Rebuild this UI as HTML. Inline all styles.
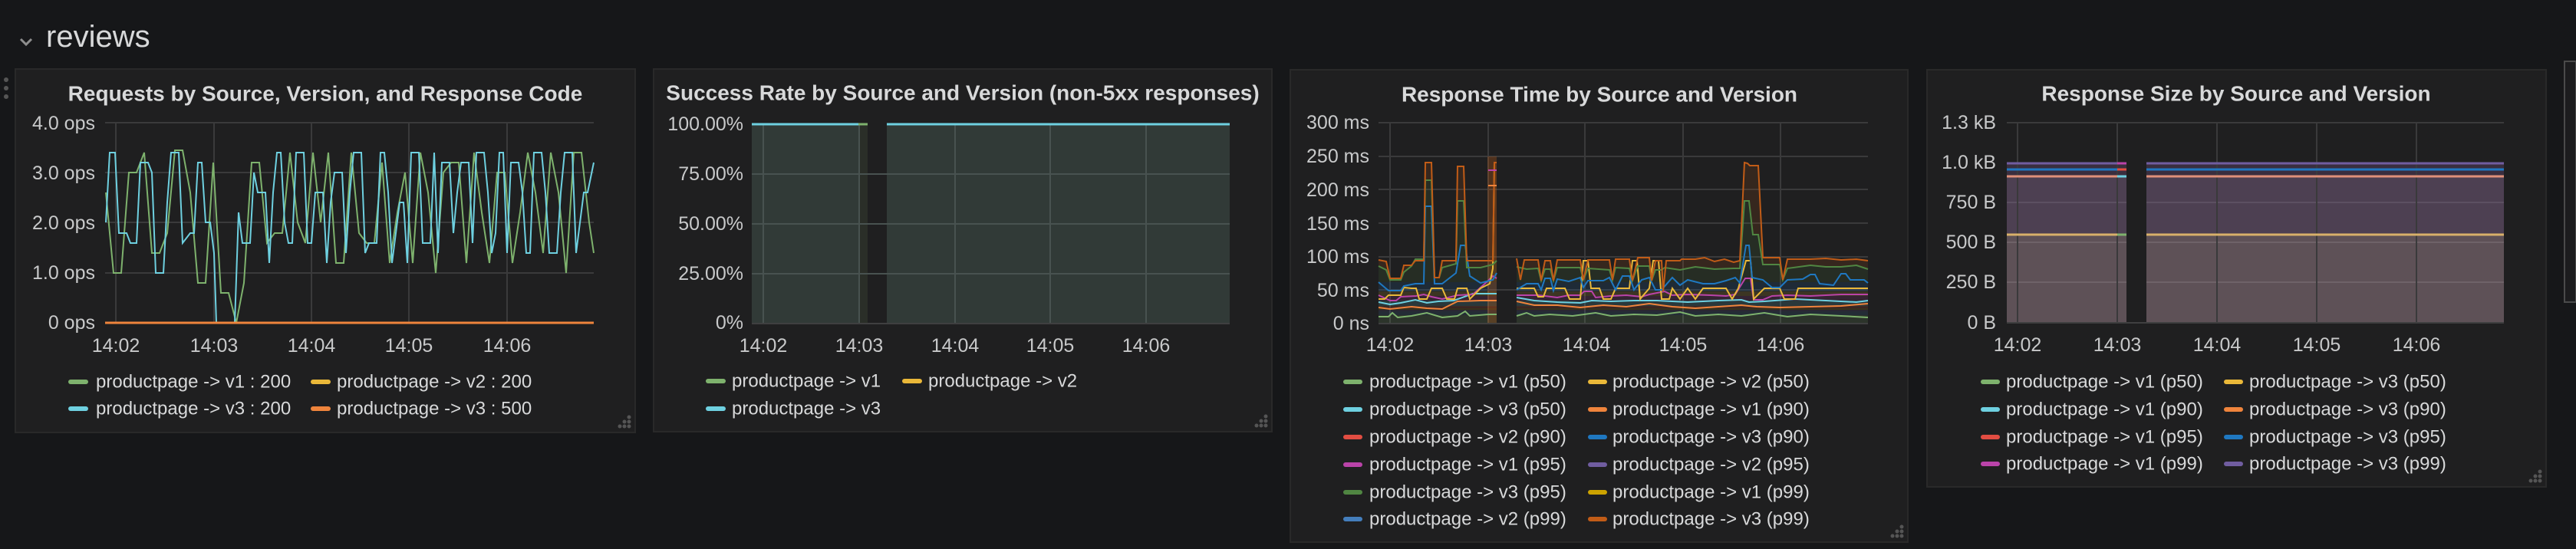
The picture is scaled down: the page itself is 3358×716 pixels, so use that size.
<!DOCTYPE html>
<html><head><meta charset="utf-8"><style>
html,body{margin:0;padding:0;background:#161719;width:3358px;height:716px;overflow:hidden}
svg{display:block}
text{font-family:"Liberation Sans",sans-serif}
.t{font-size:28px;font-weight:bold;fill:#d8d9da}
.ax{font-size:25px;fill:#c8c9ca}
.lg{font-size:24px;fill:#d8d9da}
.g{stroke:#3a3a3b;stroke-width:2}
</style></head><body>
<svg width="3358" height="716" viewBox="0 0 3358 716">
<!-- header -->
<path d="M27 51 L34 58 L41 51" fill="none" stroke="#8e8e8e" stroke-width="3"/>
<text x="60" y="48" font-size="40" fill="#d8d9da" dominant-baseline="central" style="font-family:'Liberation Sans',sans-serif">reviews</text>
<g fill="#555"><circle cx="8" cy="104" r="3"/><circle cx="8" cy="115" r="3"/><circle cx="8" cy="126" r="3"/></g>
<!-- scrollbar -->
<rect x="3343" y="80" width="15" height="314" fill="#1c1c1e" stroke="#4a4a4a" stroke-width="2"/>

<!-- panels -->
<rect x="20" y="90" width="808" height="474" fill="#1f1f20" stroke="#292929" stroke-width="2"/>
<rect x="852" y="90" width="806" height="473" fill="#1f1f20" stroke="#292929" stroke-width="2"/>
<rect x="1682" y="91" width="805" height="616" fill="#1f1f20" stroke="#292929" stroke-width="2"/>
<rect x="2512" y="91" width="807" height="544" fill="#1f1f20" stroke="#292929" stroke-width="2"/>

<!-- resize handles -->
<g fill="#555">
<circle cx="820" cy="556" r="2.5"/><circle cx="814" cy="556" r="2.5"/><circle cx="820" cy="550" r="2.5"/><circle cx="808" cy="556" r="2.5"/><circle cx="814" cy="550" r="2.5"/><circle cx="820" cy="544" r="2.5"/>
<circle cx="1650" cy="555" r="2.5"/><circle cx="1644" cy="555" r="2.5"/><circle cx="1650" cy="549" r="2.5"/><circle cx="1638" cy="555" r="2.5"/><circle cx="1644" cy="549" r="2.5"/><circle cx="1650" cy="543" r="2.5"/>
<circle cx="2479" cy="699" r="2.5"/><circle cx="2473" cy="699" r="2.5"/><circle cx="2479" cy="693" r="2.5"/><circle cx="2467" cy="699" r="2.5"/><circle cx="2473" cy="693" r="2.5"/><circle cx="2479" cy="687" r="2.5"/>
<circle cx="3311" cy="627" r="2.5"/><circle cx="3305" cy="627" r="2.5"/><circle cx="3311" cy="621" r="2.5"/><circle cx="3299" cy="627" r="2.5"/><circle cx="3305" cy="621" r="2.5"/><circle cx="3311" cy="615" r="2.5"/>
</g>

<!-- ============ PANEL 1 ============ -->
<text class="t" x="424" y="122" text-anchor="middle" dominant-baseline="central">Requests by Source, Version, and Response Code</text>
<g class="g">
<line x1="137" y1="160" x2="774" y2="160"/><line x1="137" y1="225" x2="774" y2="225"/><line x1="137" y1="290" x2="774" y2="290"/><line x1="137" y1="356" x2="774" y2="356"/>
<line x1="151" y1="160" x2="151" y2="421"/><line x1="279" y1="160" x2="279" y2="421"/><line x1="406" y1="160" x2="406" y2="421"/><line x1="533" y1="160" x2="533" y2="421"/><line x1="661" y1="160" x2="661" y2="421"/>
</g>
<g class="ax" text-anchor="end" dominant-baseline="central">
<text x="124" y="161">4.0 ops</text><text x="124" y="226">3.0 ops</text><text x="124" y="291">2.0 ops</text><text x="124" y="356">1.0 ops</text><text x="124" y="421">0 ops</text>
</g>
<g class="ax" text-anchor="middle" dominant-baseline="central">
<text x="151" y="451">14:02</text><text x="279" y="451">14:03</text><text x="406" y="451">14:04</text><text x="533" y="451">14:05</text><text x="661" y="451">14:06</text>
</g>
<polyline fill="none" stroke="#7eb26d" stroke-width="2" points="138,251 148,356 158,356 168,225 178,225 188,199 198,330 208,330 218,304 228,196 238,196 248,251 258,369 268,369 278,212 288,382 298,382 308,421 318,369 328,212 338,212 348,317 358,304 368,304 378,199 388,290 398,317 408,199 418,290 428,199 438,343 448,343 458,199 468,304 478,317 488,317 498,212 508,343 518,277 528,225 538,343 548,199 558,251 568,356 578,225 588,212 598,212 608,343 618,199 628,277 638,343 648,225 658,225 668,343 678,277 688,199 698,251 708,330 718,199 728,251 738,356 748,199 758,199 768,290 774,330"/>
<polyline fill="none" stroke="#6ed0e0" stroke-width="2" points="138,290 143,199 150,199 155,304 165,304 170,317 178,317 183,212 193,212 198,225 203,356 213,356 218,264 223,199 233,199 238,317 248,304 253,304 258,212 263,212 268,290 274,290 279,330 282,421 306,421 311,277 316,317 326,317 331,225 336,251 346,251 351,343 356,251 361,199 366,199 371,290 376,317 381,317 386,199 396,199 401,317 406,317 411,251 421,251 426,343 431,264 436,225 446,225 451,330 456,251 461,199 471,199 476,330 481,317 491,317 496,199 501,199 506,251 511,343 516,304 521,264 526,264 531,343 536,199 546,199 551,317 561,317 566,199 571,330 576,212 586,212 591,304 596,251 601,212 611,212 616,317 621,199 631,199 636,251 641,330 646,304 651,199 656,199 661,330 666,212 676,212 681,251 686,330 691,330 696,199 706,199 711,251 716,330 726,330 731,251 736,199 746,199 751,330 761,251 766,251 774,212"/>
<line x1="137" y1="421" x2="774" y2="421" stroke="#ef843c" stroke-width="3"/>
<g>
<rect x="89" y="495" width="26" height="6" rx="3" fill="#7eb26d"/><text class="lg" x="125" y="498" dominant-baseline="central">productpage -&gt; v1 : 200</text>
<rect x="405" y="495" width="26" height="6" rx="3" fill="#eab839"/><text class="lg" x="439" y="498" dominant-baseline="central">productpage -&gt; v2 : 200</text>
<rect x="89" y="530" width="26" height="6" rx="3" fill="#6ed0e0"/><text class="lg" x="125" y="533" dominant-baseline="central">productpage -&gt; v3 : 200</text>
<rect x="405" y="530" width="26" height="6" rx="3" fill="#ef843c"/><text class="lg" x="439" y="533" dominant-baseline="central">productpage -&gt; v3 : 500</text>
</g>

<!-- ============ PANEL 2 ============ -->
<text class="t" x="1255" y="121" text-anchor="middle" dominant-baseline="central">Success Rate by Source and Version (non-5xx responses)</text>
<rect x="980" y="162" width="139" height="260" fill="#313a37"/>
<rect x="1119" y="162" width="12" height="260" fill="#2a2e28"/>
<rect x="1156" y="162" width="447" height="260" fill="#313a37"/>
<g class="g" style="stroke:#485250">
<line x1="980" y1="227" x2="1603" y2="227"/><line x1="980" y1="292" x2="1603" y2="292"/><line x1="980" y1="357" x2="1603" y2="357"/>
<line x1="995" y1="162" x2="995" y2="422"/><line x1="1120" y1="162" x2="1120" y2="422"/><line x1="1245" y1="162" x2="1245" y2="422"/><line x1="1369" y1="162" x2="1369" y2="422"/><line x1="1494" y1="162" x2="1494" y2="422"/>
</g>
<line x1="980" y1="422" x2="1603" y2="422" stroke="#3f3f40" stroke-width="2"/>
<line x1="980" y1="162" x2="1119" y2="162" stroke="#6ed0e0" stroke-width="3"/>
<line x1="1119" y1="162" x2="1131" y2="162" stroke="#7eb26d" stroke-width="3"/>
<line x1="1156" y1="162" x2="1603" y2="162" stroke="#6ed0e0" stroke-width="3"/>
<g class="ax" text-anchor="end" dominant-baseline="central">
<text x="969" y="162">100.00%</text><text x="969" y="227">75.00%</text><text x="969" y="292">50.00%</text><text x="969" y="357">25.00%</text><text x="969" y="421">0%</text>
</g>
<g class="ax" text-anchor="middle" dominant-baseline="central">
<text x="995" y="451">14:02</text><text x="1120" y="451">14:03</text><text x="1245" y="451">14:04</text><text x="1369" y="451">14:05</text><text x="1494" y="451">14:06</text>
</g>
<rect x="920" y="494" width="26" height="6" rx="3" fill="#7eb26d"/><text class="lg" x="954" y="497" dominant-baseline="central">productpage -&gt; v1</text>
<rect x="1176" y="494" width="26" height="6" rx="3" fill="#eab839"/><text class="lg" x="1210" y="497" dominant-baseline="central">productpage -&gt; v2</text>
<rect x="920" y="530" width="26" height="6" rx="3" fill="#6ed0e0"/><text class="lg" x="954" y="533" dominant-baseline="central">productpage -&gt; v3</text>

<!-- ============ PANEL 3 ============ -->
<text class="t" x="2085" y="123" text-anchor="middle" dominant-baseline="central">Response Time by Source and Version</text>
<g class="g">
<line x1="1797" y1="160" x2="2435" y2="160"/><line x1="1797" y1="204" x2="2435" y2="204"/><line x1="1797" y1="247" x2="2435" y2="247"/><line x1="1797" y1="291" x2="2435" y2="291"/><line x1="1797" y1="335" x2="2435" y2="335"/><line x1="1797" y1="378" x2="2435" y2="378"/>
<line x1="1812" y1="160" x2="1812" y2="422"/><line x1="1940" y1="160" x2="1940" y2="422"/><line x1="2066" y1="160" x2="2066" y2="422"/><line x1="2194" y1="160" x2="2194" y2="422"/><line x1="2321" y1="160" x2="2321" y2="422"/>
</g>
<g opacity="0.14">
<polygon fill="#c15c17" points="1797,422 1797,339 1807,341 1812,363 1826,363 1830,346 1840,346 1845,340 1856,340 1858,212 1866,212 1870,362 1876,362 1880,340 1898,340 1900,217 1908,217 1912,340 1946,340 1948,212 1951,212 1951,422"/>
<polygon fill="#c15c17" points="1977,422 1977,337 1982,365 1987,339 2005,339 2009,366 2014,340 2021,340 2025,366 2030,339 2060,339 2064,365 2070,339 2098,339 2102,365 2106,338 2124,338 2128,366 2135,336 2150,336 2153,366 2158,340 2166,340 2168,380 2172,340 2190,340 2192,338 2210,338 2222,336 2235,341 2248,338 2260,342 2268,340 2274,212 2278,213 2281,216 2292,216 2298,336 2320,336 2324,365 2330,338 2360,338 2380,337 2400,339 2420,338 2435,340 2435,422"/>
<polygon fill="#508642" points="1797,422 1797,347 1807,352 1812,365 1826,365 1830,355 1840,347 1845,338 1856,338 1858,235 1866,235 1870,362 1876,362 1880,349 1898,344 1900,262 1908,262 1912,349 1930,349 1946,345 1951,340 1951,422"/>
<polygon fill="#508642" points="1977,422 1977,348 1990,351 2005,350 2009,366 2014,351 2021,351 2025,366 2030,349 2060,349 2064,365 2070,350 2098,352 2102,365 2106,349 2124,350 2128,366 2135,347 2150,347 2153,366 2158,352 2166,352 2170,349 2190,352 2210,348 2235,351 2260,350 2268,350 2274,262 2280,262 2285,306 2292,306 2298,345 2320,345 2324,365 2330,350 2360,346 2380,348 2400,348 2420,346 2435,351 2435,422"/>
<rect x="1797" y="368" width="154" height="54" fill="#1f78c1"/><rect x="1977" y="368" width="458" height="54" fill="#1f78c1"/>
<rect x="1797" y="380" width="154" height="42" fill="#eab839"/><rect x="1977" y="380" width="458" height="42" fill="#eab839"/>
<rect x="1797" y="386" width="154" height="36" fill="#ba43a9"/><rect x="1977" y="386" width="458" height="36" fill="#ba43a9"/>
<rect x="1797" y="392" width="154" height="30" fill="#6ed0e0"/><rect x="1977" y="392" width="458" height="30" fill="#6ed0e0"/>
<rect x="1797" y="399" width="154" height="23" fill="#ef843c"/><rect x="1977" y="399" width="458" height="23" fill="#ef843c"/>
<rect x="1797" y="400" width="154" height="22" fill="#e24d42"/><rect x="1977" y="400" width="458" height="22" fill="#e24d42"/>
<rect x="1797" y="402" width="154" height="20" fill="#cca300"/><rect x="1977" y="402" width="458" height="20" fill="#cca300"/>
<rect x="1797" y="404" width="154" height="18" fill="#705da0"/><rect x="1977" y="404" width="458" height="18" fill="#705da0"/>
<rect x="1797" y="406" width="154" height="16" fill="#447ebc"/><rect x="1977" y="406" width="458" height="16" fill="#447ebc"/>
<rect x="1797" y="411" width="154" height="11" fill="#7eb26d"/><rect x="1977" y="411" width="458" height="11" fill="#7eb26d"/>
</g>
<rect x="1939" y="204" width="12" height="218" fill="#c15c17" opacity="0.3"/>
<g fill="none" stroke-width="2">
<polyline stroke="#7eb26d" points="1797,413 1810,413 1815,408 1822,414 1840,412 1860,408 1880,414 1900,412 1910,406 1916,412 1940,410 1951,410"/>
<polyline stroke="#7eb26d" points="1977,412 1990,408 2000,412 2020,410 2050,412 2080,408 2100,412 2130,410 2160,411 2190,407 2210,412 2240,410 2270,412 2300,408 2330,413 2360,410 2400,412 2435,414"/>
<polyline stroke="#ef843c" points="1797,401 1812,403 1840,400 1860,402 1880,403 1900,393 1930,392 1951,392"/>
<polyline stroke="#ef843c" points="1977,393 2000,398 2030,398 2060,401 2090,398 2120,400 2150,396 2180,400 2210,402 2240,400 2270,398 2290,400 2320,401 2360,400 2400,399 2435,396"/>
<polyline stroke="#6ed0e0" points="1797,394 1812,397 1826,395 1845,391 1860,395 1875,393 1895,392 1920,383 1951,383"/>
<polyline stroke="#6ed0e0" points="1977,388 2000,392 2030,394 2060,395 2075,392 2100,393 2130,392 2160,392 2200,394 2240,392 2270,391 2280,394 2300,393 2340,390 2380,392 2420,394 2435,392"/>
<polyline stroke="#ba43a9" points="1797,385 1812,392 1820,392 1826,387 1846,386 1856,384 1866,387 1880,390 1900,385 1920,384 1940,366 1946,360 1951,363"/>
<polyline stroke="#ba43a9" points="1977,385 2005,385 2014,386 2030,388 2045,385 2060,385 2065,380 2075,380 2080,388 2100,386 2120,385 2140,387 2150,384 2170,380 2180,385 2200,384 2230,385 2250,386 2262,384 2275,363 2282,363 2286,391 2298,391 2310,386 2330,385 2360,386 2400,384 2435,384"/>
<polyline stroke="#eab839" points="1797,390 1805,390 1810,385 1826,385 1830,375 1840,376 1846,376 1850,390 1860,390 1866,376 1880,376 1886,390 1896,390 1900,376 1912,376 1916,390 1930,376 1942,370 1946,350 1948,212 1951,212"/>
<polyline stroke="#eab839" points="1977,376 2000,376 2005,387 2012,387 2016,376 2030,376 2040,376 2046,390 2060,390 2064,340 2070,340 2074,376 2085,376 2090,390 2100,390 2106,376 2124,376 2128,340 2134,340 2138,390 2150,376 2155,340 2162,340 2166,390 2176,390 2180,376 2190,390 2200,376 2210,390 2220,376 2240,376 2250,376 2258,390 2266,376 2276,340 2282,340 2286,390 2300,376 2320,376 2326,390 2340,390 2344,376 2400,376 2435,376"/>
<polyline stroke="#1f78c1" points="1797,368 1810,379 1826,379 1830,373 1845,370 1856,370 1858,269 1866,269 1870,370 1880,370 1898,356 1904,320 1910,320 1916,360 1930,369 1946,365 1951,356"/>
<polyline stroke="#1f78c1" points="1977,378 1990,370 2005,370 2009,378 2014,363 2021,363 2025,379 2030,364 2045,367 2060,362 2064,375 2070,366 2090,366 2098,362 2106,378 2115,360 2124,360 2130,378 2140,365 2150,362 2158,378 2166,378 2180,362 2190,372 2200,365 2220,370 2235,370 2250,366 2262,362 2268,369 2276,320 2280,320 2284,362 2298,365 2310,375 2320,375 2330,365 2350,364 2360,358 2366,358 2372,370 2390,372 2400,357 2406,357 2412,365 2430,365 2435,369"/>
<polyline stroke="#508642" points="1797,347 1807,352 1812,365 1826,365 1830,355 1840,347 1845,338 1856,338 1858,235 1866,235 1870,362 1876,362 1880,349 1898,344 1900,262 1908,262 1912,349 1930,349 1946,345 1951,340"/>
<polyline stroke="#508642" points="1977,348 1990,351 2005,350 2009,366 2014,351 2021,351 2025,366 2030,349 2060,349 2064,365 2070,350 2098,352 2102,365 2106,349 2124,350 2128,366 2135,347 2150,347 2153,366 2158,352 2166,352 2170,349 2190,352 2210,348 2235,351 2260,350 2268,350 2274,262 2280,262 2285,306 2292,306 2298,345 2320,345 2324,365 2330,350 2360,346 2380,348 2400,348 2420,346 2435,351"/>
<polyline stroke="#c15c17" points="1797,339 1807,341 1812,363 1826,363 1830,346 1840,346 1845,340 1856,340 1858,212 1866,212 1870,362 1876,362 1880,340 1898,340 1900,217 1908,217 1912,340 1946,340 1948,212 1951,212"/>
<polyline stroke="#c15c17" points="1977,337 1982,365 1987,339 2005,339 2009,366 2014,340 2021,340 2025,366 2030,339 2060,339 2064,365 2070,339 2098,339 2102,365 2106,338 2124,338 2128,366 2135,336 2150,336 2153,366 2158,340 2166,340 2168,380 2172,340 2190,340 2192,338 2210,338 2222,336 2235,341 2248,338 2260,342 2268,340 2274,212 2278,213 2281,216 2292,216 2298,336 2320,336 2324,365 2330,338 2360,338 2380,337 2400,339 2420,338 2435,340"/>
<line x1="1940" y1="222" x2="1951" y2="222" stroke="#ba43a9"/>
<line x1="1940" y1="242" x2="1951" y2="242" stroke="#ef843c"/>
</g>
<line x1="1797" y1="422" x2="2435" y2="422" stroke="#3f3f40" stroke-width="2"/>
<g class="ax" text-anchor="end" dominant-baseline="central">
<text x="1785" y="160">300 ms</text><text x="1785" y="204">250 ms</text><text x="1785" y="248">200 ms</text><text x="1785" y="292">150 ms</text><text x="1785" y="335">100 ms</text><text x="1785" y="379">50 ms</text><text x="1785" y="422">0 ns</text>
</g>
<g class="ax" text-anchor="middle" dominant-baseline="central">
<text x="1812" y="450">14:02</text><text x="1940" y="450">14:03</text><text x="2068" y="450">14:04</text><text x="2194" y="450">14:05</text><text x="2321" y="450">14:06</text>
</g>
<g>
<rect x="1751" y="495" width="25" height="6" rx="3" fill="#7eb26d"/><text class="lg" x="1785" y="498" dominant-baseline="central">productpage -&gt; v1 (p50)</text>
<rect x="2070" y="495" width="25" height="6" rx="3" fill="#eab839"/><text class="lg" x="2102" y="498" dominant-baseline="central">productpage -&gt; v2 (p50)</text>
<rect x="1751" y="531" width="25" height="6" rx="3" fill="#6ed0e0"/><text class="lg" x="1785" y="534" dominant-baseline="central">productpage -&gt; v3 (p50)</text>
<rect x="2070" y="531" width="25" height="6" rx="3" fill="#ef843c"/><text class="lg" x="2102" y="534" dominant-baseline="central">productpage -&gt; v1 (p90)</text>
<rect x="1751" y="567" width="25" height="6" rx="3" fill="#e24d42"/><text class="lg" x="1785" y="570" dominant-baseline="central">productpage -&gt; v2 (p90)</text>
<rect x="2070" y="567" width="25" height="6" rx="3" fill="#1f78c1"/><text class="lg" x="2102" y="570" dominant-baseline="central">productpage -&gt; v3 (p90)</text>
<rect x="1751" y="603" width="25" height="6" rx="3" fill="#ba43a9"/><text class="lg" x="1785" y="606" dominant-baseline="central">productpage -&gt; v1 (p95)</text>
<rect x="2070" y="603" width="25" height="6" rx="3" fill="#705da0"/><text class="lg" x="2102" y="606" dominant-baseline="central">productpage -&gt; v2 (p95)</text>
<rect x="1751" y="639" width="25" height="6" rx="3" fill="#508642"/><text class="lg" x="1785" y="642" dominant-baseline="central">productpage -&gt; v3 (p95)</text>
<rect x="2070" y="639" width="25" height="6" rx="3" fill="#cca300"/><text class="lg" x="2102" y="642" dominant-baseline="central">productpage -&gt; v1 (p99)</text>
<rect x="1751" y="674" width="25" height="6" rx="3" fill="#447ebc"/><text class="lg" x="1785" y="677" dominant-baseline="central">productpage -&gt; v2 (p99)</text>
<rect x="2070" y="674" width="25" height="6" rx="3" fill="#c15c17"/><text class="lg" x="2102" y="677" dominant-baseline="central">productpage -&gt; v3 (p99)</text>
</g>

<!-- ============ PANEL 4 ============ -->
<text class="t" x="2915" y="122" text-anchor="middle" dominant-baseline="central">Response Size by Source and Version</text>
<rect x="2616" y="212" width="156" height="18" fill="#3a2e3f"/><rect x="2798" y="212" width="466" height="18" fill="#3a2e3f"/>
<rect x="2616" y="230" width="156" height="76" fill="#4d4052"/><rect x="2798" y="230" width="466" height="76" fill="#4d4052"/>
<rect x="2616" y="306" width="156" height="115" fill="#5e5157"/><rect x="2798" y="306" width="466" height="115" fill="#5e5157"/>
<g class="g">
<line x1="2616" y1="160" x2="3264" y2="160"/>
<line x1="2616" y1="264" x2="3264" y2="264" style="stroke:#5c5062"/><line x1="2616" y1="316" x2="3264" y2="316" style="stroke:#6e6268"/><line x1="2616" y1="368" x2="3264" y2="368" style="stroke:#6e6268"/>
<line x1="2630" y1="160" x2="2630" y2="421"/><line x1="2760" y1="160" x2="2760" y2="421"/><line x1="2890" y1="160" x2="2890" y2="421"/><line x1="3020" y1="160" x2="3020" y2="421"/><line x1="3150" y1="160" x2="3150" y2="421"/>
</g>
<rect x="2772" y="212" width="26" height="210" fill="#1f1f20"/>
<g stroke-width="3">
<line x1="2616" y1="213" x2="2772" y2="213" stroke="#705da0"/><line x1="2798" y1="213" x2="3264" y2="213" stroke="#705da0"/>
<line x1="2760" y1="213" x2="2772" y2="213" stroke="#ba43a9"/>
<line x1="2616" y1="221" x2="2760" y2="221" stroke="#1f78c1"/><line x1="2760" y1="221" x2="2772" y2="221" stroke="#e24d42"/><line x1="2798" y1="221" x2="3264" y2="221" stroke="#1f78c1"/>
<line x1="2616" y1="230" x2="2772" y2="230" stroke="#e0917a"/><line x1="2760" y1="230" x2="2772" y2="230" stroke="#6ed0e0"/><line x1="2798" y1="230" x2="3264" y2="230" stroke="#e0917a"/>
<line x1="2616" y1="306" x2="2772" y2="306" stroke="#d8b06a"/><line x1="2760" y1="306" x2="2772" y2="306" stroke="#7eb26d"/><line x1="2798" y1="306" x2="3264" y2="306" stroke="#d8b06a"/>
</g>
<line x1="2616" y1="421" x2="3264" y2="421" stroke="#3f3f40" stroke-width="2"/>
<g class="ax" text-anchor="end" dominant-baseline="central">
<text x="2602" y="160">1.3 kB</text><text x="2602" y="212">1.0 kB</text><text x="2602" y="264">750 B</text><text x="2602" y="316">500 B</text><text x="2602" y="368">250 B</text><text x="2602" y="421">0 B</text>
</g>
<g class="ax" text-anchor="middle" dominant-baseline="central">
<text x="2630" y="450">14:02</text><text x="2760" y="450">14:03</text><text x="2890" y="450">14:04</text><text x="3020" y="450">14:05</text><text x="3150" y="450">14:06</text>
</g>
<g>
<rect x="2582" y="495" width="25" height="6" rx="3" fill="#7eb26d"/><text class="lg" x="2615" y="498" dominant-baseline="central">productpage -&gt; v1 (p50)</text>
<rect x="2899" y="495" width="25" height="6" rx="3" fill="#eab839"/><text class="lg" x="2932" y="498" dominant-baseline="central">productpage -&gt; v3 (p50)</text>
<rect x="2582" y="531" width="25" height="6" rx="3" fill="#6ed0e0"/><text class="lg" x="2615" y="534" dominant-baseline="central">productpage -&gt; v1 (p90)</text>
<rect x="2899" y="531" width="25" height="6" rx="3" fill="#ef843c"/><text class="lg" x="2932" y="534" dominant-baseline="central">productpage -&gt; v3 (p90)</text>
<rect x="2582" y="567" width="25" height="6" rx="3" fill="#e24d42"/><text class="lg" x="2615" y="570" dominant-baseline="central">productpage -&gt; v1 (p95)</text>
<rect x="2899" y="567" width="25" height="6" rx="3" fill="#1f78c1"/><text class="lg" x="2932" y="570" dominant-baseline="central">productpage -&gt; v3 (p95)</text>
<rect x="2582" y="602" width="25" height="6" rx="3" fill="#ba43a9"/><text class="lg" x="2615" y="605" dominant-baseline="central">productpage -&gt; v1 (p99)</text>
<rect x="2899" y="602" width="25" height="6" rx="3" fill="#705da0"/><text class="lg" x="2932" y="605" dominant-baseline="central">productpage -&gt; v3 (p99)</text>
</g>
</svg>
</body></html>
